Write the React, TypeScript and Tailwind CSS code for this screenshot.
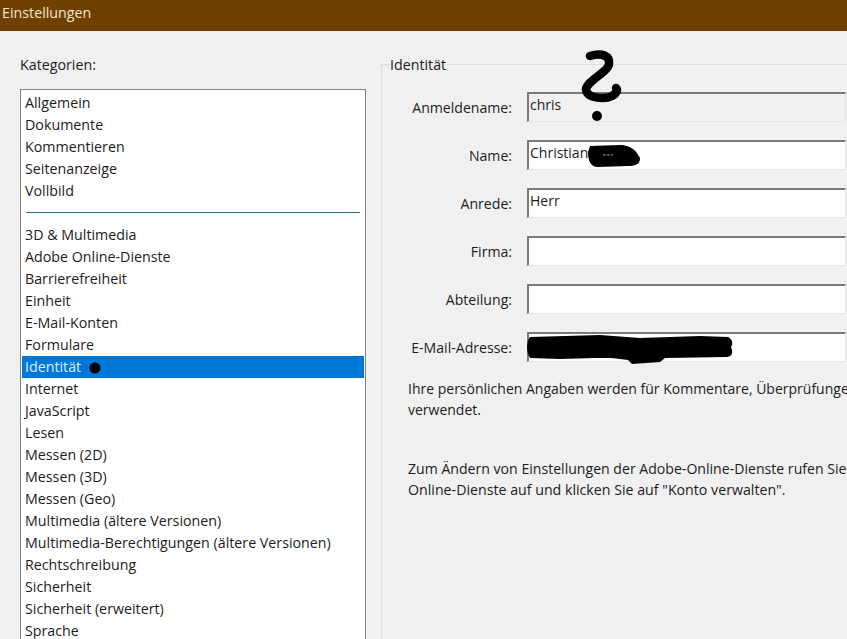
const group1 = ["Allgemein", "Dokumente", "Kommentieren", "Seitenanzeige", "Vollbild"];
const group2 = ["3D & Multimedia", "Adobe Online-Dienste", "Barrierefreiheit", "Einheit", "E-Mail-Konten", "Formulare", "Identität", "Internet", "JavaScript", "Lesen", "Messen (2D)", "Messen (3D)", "Messen (Geo)", "Multimedia (ältere Versionen)", "Multimedia-Berechtigungen (ältere Versionen)", "Rechtschreibung", "Sicherheit", "Sicherheit (erweitert)", "Sprache"];
const fields = [
  { label: "Anmeldename:", value: "chris", disabled: true },
  { label: "Name:", value: "Christian" },
  { label: "Anrede:", value: "Herr" },
  { label: "Firma:", value: "" },
  { label: "Abteilung:", value: "" },
  { label: "E-Mail-Adresse:", value: "" },
];

function Item({ text }: { text: string }) {
  const selected = text === "Identität";
  return (
    <div className={`h-[22px] leading-[22px] pl-[3px] whitespace-nowrap ${selected ? "bg-[#0078d7] text-[#d8f0ff]" : ""}`}>
      {text}
    </div>
  );
}

export default function App() {
  return (
    <div className="relative w-[847px] h-[639px] overflow-hidden bg-[#f0f0f0] text-[14.25px] text-[#1c1c1c] font-['Open_Sans','Noto_Sans',sans-serif]">
      <div className="h-[31px] bg-[#704000] pl-[2px] leading-[26px] text-[#f3e6d4]">Einstellungen</div>
      <div className="flex pl-[20px]">
        <div className="w-[346px] shrink-0">
          <div className="h-[58px] pt-[24px] leading-[20px]">Kategorien:</div>
          <div className="h-[560px] border border-[#828282] bg-white pl-px pr-px pt-[2px]">
            {group1.map((t) => <Item key={t} text={t} />)}
            <div className="h-[22px] pt-[10px] px-[4px]"><div className="h-px bg-[#2f6f9c]" /></div>
            {group2.map((t) => <Item key={t} text={t} />)}
          </div>
        </div>
        <div className="ml-[15px] mt-[33px] w-[466px] shrink-0 h-[600px] border-l border-t border-[#dcdcdc] relative">
          <div className="absolute left-[8px] top-[-10px] bg-[#f0f0f0] pr-[1px] leading-[20px]">Identität</div>
          <div className="pt-[27px] pl-[26px] flex flex-col gap-[18px]">
            {fields.map((f) => (
              <div key={f.label} className="flex items-center gap-[15px]">
                <div className="w-[104px] text-right pt-[2px] whitespace-nowrap text-[14.1px]">{f.label}</div>
                <div className={`w-[319px] h-[30px] border-t-2 border-l-2 border-[#7a7a7a] pl-[1px] leading-[22px] text-[14px] border-b border-r border-b-[#e4e4e4] border-r-[#e4e4e4] ${f.disabled ? "bg-[#f0f0f0]" : "bg-white"}`}>{f.value}</div>
              </div>
            ))}
          </div>
          <div className="mt-[16px] ml-[26px] leading-[21px] whitespace-nowrap overflow-hidden">
            <div className="text-[14px]">Ihre persönlichen Angaben werden für Kommentare, Überprüfungen und</div>
            <div className="text-[14px]">verwendet.</div>
            <div className="mt-[38px] text-[14.1px]">Zum Ändern von Einstellungen der Adobe-Online-Dienste rufen Sie</div>
            <div className="text-[14.2px]">Online-Dienste auf und klicken Sie auf "Konto verwalten".</div>
          </div>
        </div>
      </div>
      <svg className="absolute inset-0 pointer-events-none" width="847" height="639" viewBox="0 0 847 639" fill="none">
        <path d="M590 56 C602 52 610 56 609 64 C608 72 588 80 586 89 C586 98 604 100 612 96 C617 93 618 90 616 88" stroke="#000" strokeWidth="8.5" strokeLinecap="round" strokeLinejoin="round" />
        <circle cx="597" cy="116" r="5" fill="#000" />
        <circle cx="95" cy="368" r="5.5" fill="#000" />
        <path d="M590 146 L620 145 C630 145 636 150 640 158 C640 164 636 166 628 166 L598 167 C590 167 588 160 588 152 Z" fill="#000" />
        <path d="M603 155 L613 155" stroke="#9a9a9a" strokeWidth="1" strokeDasharray="3 1" />
        <path d="M530 337 L600 335 L640 338 L700 336 L728 337 C733 339 733 345 731 347 C733 352 733 356 727 357 L665 358 L660 362 L632 364 L628 360 L612 358 L595 358 L560 359 L530 358 C526 352 526 342 530 337 Z" fill="#000" />
      </svg>
    </div>
  );
}
